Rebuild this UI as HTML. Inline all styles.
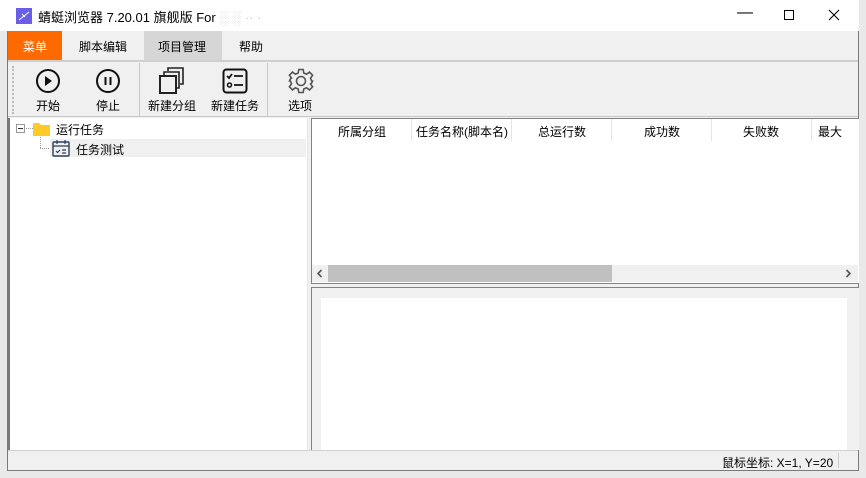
<!DOCTYPE html><html><head><meta charset="utf-8"><style>
*{margin:0;padding:0;box-sizing:border-box}
body{width:866px;height:478px;background:#e9e9e9;position:relative;overflow:hidden;font-family:"Liberation Sans","Noto Sans CJK SC",sans-serif;font-size:12px;color:#000}
.a{position:absolute}
.t{position:absolute;white-space:nowrap}
</style></head><body>
<div class="a" style="left:7px;top:0;width:852px;height:471px;background:#f0f0f0;border:1px solid #7a7a7a;border-top:none"></div>
<div class="a" style="left:0;top:0;width:859px;height:31px;background:#fff"></div>
<div class="a" style="left:16px;top:8px;width:16px;height:16px;background:#6a5ee8"></div>
<svg class="a" style="left:16px;top:8px" width="16" height="16"><path d="M3 12 L13 4 M6 6 L9 9" stroke="#fff" stroke-width="1"/></svg>
<div class="t" style="left:38px;top:7px;font-size:13px">蜻蜓浏览器 7.20.01 旗舰版 For <span style="color:#ccc">░ ░ ·· ·</span></div>
<div class="t" style="left:737px;top:4px;font-size:16px">&#8212;</div>
<div class="a" style="left:784px;top:10px;width:10px;height:10px;border:1px solid #000"></div>
<svg class="a" style="left:828px;top:9px" width="12" height="12"><path d="M1 1L11 11M11 1L1 11" stroke="#000" stroke-width="1.1"/></svg>
<div class="a" style="left:8px;top:31px;width:54px;height:30px;background:#ff6a00"></div>
<div class="t" style="left:8px;top:38px;width:54px;text-align:center;color:#fff;font-size:12px">菜单</div>
<div class="t" style="left:79px;top:38px;font-size:12px">脚本编辑</div>
<div class="a" style="left:144px;top:31px;width:78px;height:30px;background:#d6d6d6"></div>
<div class="t" style="left:158px;top:38px;font-size:12px">项目管理</div>
<div class="t" style="left:239px;top:38px;font-size:12px">帮助</div>
<div class="a" style="left:8px;top:60px;width:850px;height:2px;background:#cfcfcf"></div>
<div class="a" style="left:12px;top:66px;width:2px;height:48px;border-left:2px dotted #bbb"></div>
<div class="a" style="left:139px;top:63px;width:1px;height:53px;background:#c8c8c8"></div>
<div class="a" style="left:267px;top:63px;width:1px;height:53px;background:#c8c8c8"></div>
<svg class="a" style="left:35px;top:68px" width="26" height="26"><circle cx="13" cy="13" r="11" fill="none" stroke="#111" stroke-width="2"/><path d="M10 8L17 13L10 18Z" fill="#111"/></svg>
<svg class="a" style="left:95px;top:68px" width="26" height="26"><circle cx="13" cy="13" r="11" fill="none" stroke="#111" stroke-width="2"/><path d="M10.5 9V17M15.5 9V17" stroke="#111" stroke-width="2"/></svg>
<svg class="a" style="left:158px;top:67px" width="28" height="28"><rect x="2" y="9" width="16" height="17" fill="none" stroke="#222" stroke-width="2"/><path d="M6 8V5H21V21H19M10 4V1H25V17H22" fill="none" stroke="#222" stroke-width="1.6"/></svg>
<svg class="a" style="left:222px;top:68px" width="26" height="26"><rect x="1.5" y="1.5" width="23" height="23" rx="3" fill="none" stroke="#111" stroke-width="2"/><path d="M5 8L7 10L10 6M12 8H21M12 17H21" stroke="#111" stroke-width="1.8" fill="none"/><circle cx="7.5" cy="17" r="2" fill="none" stroke="#111" stroke-width="1.5"/></svg>
<svg class="a" style="left:287px;top:67px" width="28" height="28" viewBox="0 0 28 28"><path d="M11.8 2.5 L16.2 2.5 L16.8 6 L19.6 7.2 L22.5 5.1 L25.6 8.2 L23.5 11.1 L24.6 13.9 L25.5 14 L24.6 16.1 L23.5 16.9 L25.6 19.8 L22.5 22.9 L19.6 20.8 L16.8 22 L16.2 25.5 L11.8 25.5 L11.2 22 L8.4 20.8 L5.5 22.9 L2.4 19.8 L4.5 16.9 L3.4 14.1 L2.5 14 L3.4 11.9 L4.5 11.1 L2.4 8.2 L5.5 5.1 L8.4 7.2 L11.2 6 Z" fill="#f0f0f0" stroke="#555" stroke-width="1.6"/><circle cx="14" cy="14" r="4.5" fill="none" stroke="#555" stroke-width="1.6"/></svg>
<div class="t" style="left:36px;top:97px">开始</div>
<div class="t" style="left:96px;top:97px">停止</div>
<div class="t" style="left:148px;top:97px">新建分组</div>
<div class="t" style="left:211px;top:97px">新建任务</div>
<div class="t" style="left:288px;top:97px">选项</div>
<div class="a" style="left:8px;top:116px;width:850px;height:1px;background:#c8c8c8"></div>
<div class="a" style="left:8px;top:118px;width:300px;height:332px;background:#fff;border-left:2px solid #7a7a7a;border-right:1px solid #e6e6e6"></div>
<div class="a" style="left:16px;top:124px;width:9px;height:9px;border:1px solid #999;background:#fff"></div>
<div class="a" style="left:18px;top:128px;width:5px;height:1px;background:#333"></div>
<div class="a" style="left:26px;top:128px;width:7px;border-top:1px dotted #999"></div>
<div class="a" style="left:40px;top:134px;width:1px;height:14px;border-left:1px dotted #999"></div>
<div class="a" style="left:40px;top:148px;width:11px;border-top:1px dotted #999"></div>
<svg class="a" style="left:33px;top:122px" width="17" height="14"><path d="M0 1H6L8 3H17V14H0Z" fill="#ffc928"/></svg>
<div class="t" style="left:56px;top:121px">运行任务</div>
<div class="a" style="left:50px;top:139px;width:256px;height:18px;background:#f0f0f0"></div>
<svg class="a" style="left:52px;top:140px" width="18" height="17"><rect x="1" y="2" width="16" height="14" rx="1" fill="none" stroke="#2b3f5e" stroke-width="1.4"/><path d="M1 6H17M5 0V4M13 0V4M4 11L5.5 12.5L8 10M10 10H14M10 13H14" stroke="#2b3f5e" stroke-width="1.2" fill="none"/></svg>
<div class="t" style="left:76px;top:141px">任务测试</div>
<div class="a" style="left:311px;top:118px;width:548px;height:166px;background:#fff;border:1px solid #828282;border-right:none"></div>
<div class="t" style="left:338px;top:123px">所属分组</div>
<div class="t" style="left:416px;top:123px">任务名称(脚本名)</div>
<div class="t" style="left:538px;top:123px">总运行数</div>
<div class="t" style="left:644px;top:123px">成功数</div>
<div class="t" style="left:743px;top:123px">失败数</div>
<div class="t" style="left:818px;top:123px">最大</div>
<div class="a" style="left:411px;top:119px;width:1px;height:22px;background:#e5e5e5"></div>
<div class="a" style="left:511px;top:119px;width:1px;height:22px;background:#e5e5e5"></div>
<div class="a" style="left:611px;top:119px;width:1px;height:22px;background:#e5e5e5"></div>
<div class="a" style="left:711px;top:119px;width:1px;height:22px;background:#e5e5e5"></div>
<div class="a" style="left:811px;top:119px;width:1px;height:22px;background:#e5e5e5"></div>
<div class="a" style="left:312px;top:265px;width:546px;height:17px;background:#f0f0f0"></div>
<div class="a" style="left:328px;top:265px;width:284px;height:17px;background:#c0c0c0"></div>
<svg class="a" style="left:316px;top:269px" width="8" height="9"><path d="M5.5 1L2 4.5L5.5 8" fill="none" stroke="#555" stroke-width="1.6"/></svg>
<svg class="a" style="left:844px;top:269px" width="8" height="9"><path d="M2.5 1L6 4.5L2.5 8" fill="none" stroke="#555" stroke-width="1.6"/></svg>
<div class="a" style="left:311px;top:287px;width:548px;height:164px;border:1px solid #828282;border-right:none;background:#f0f0f0"></div>
<div class="a" style="left:321px;top:298px;width:526px;height:152px;background:#fff"></div>
<div class="a" style="left:8px;top:450px;width:850px;height:20px;background:#f0f0f0;border-top:1px solid #d0d0d0"></div>
<div class="t" style="left:722px;top:454px">鼠标坐标: X=1, Y=20</div>
<div class="a" style="left:838px;top:453px;width:1px;height:15px;background:#ccc"></div>
</body></html>
